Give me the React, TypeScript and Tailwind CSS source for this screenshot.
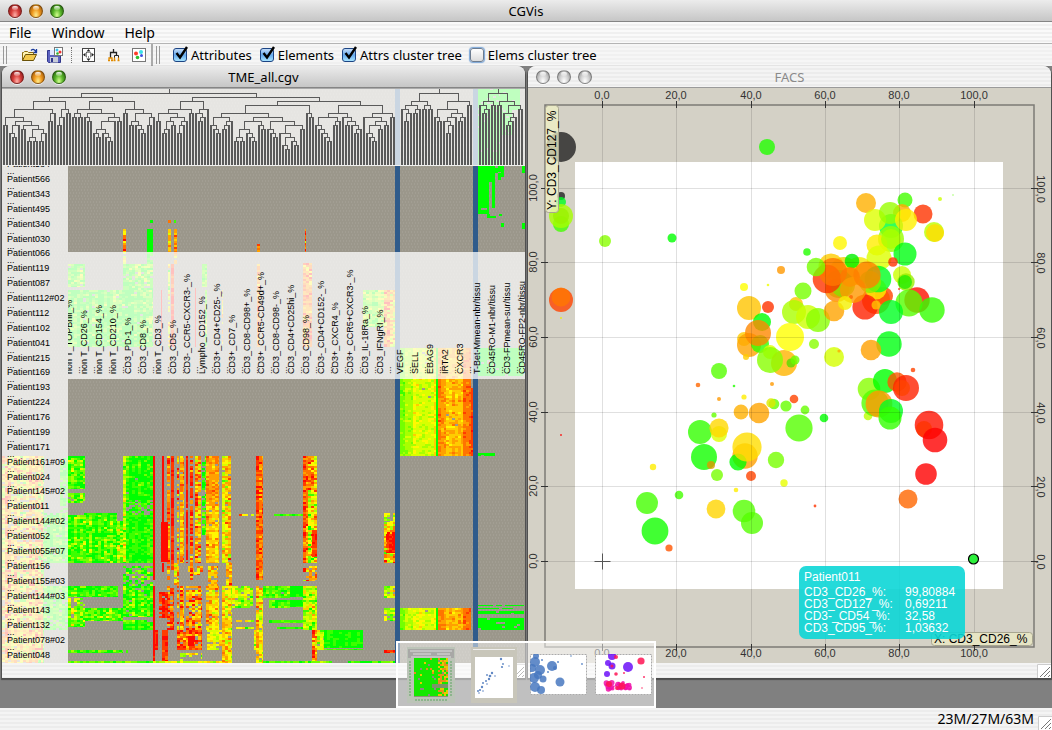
import React from "react";

/* ---------- deterministic random numbers ---------- */
function makeRandom(seed: number) {
  let s = seed;
  return () => {
    s = (s * 1664525 + 1013904223) >>> 0;
    return s / 4294967296;
  };
}

/* ---------- window chrome ---------- */
function Light({ tone, label }: { tone: "red" | "amber" | "green" | "off"; label: string }) {
  const fill = {
    red: "bg-[radial-gradient(ellipse_at_50%_85%,#ffb0a8_0%,#d8403c_45%,#7c1414_100%)]",
    amber: "bg-[radial-gradient(ellipse_at_50%_85%,#ffec8c_0%,#f09a20_45%,#8a4a08_100%)]",
    green: "bg-[radial-gradient(ellipse_at_50%_85%,#d4ff90_0%,#5cb82c_45%,#1c5408_100%)]",
    off: "bg-[radial-gradient(ellipse_at_50%_85%,#ffffff_0%,#d0d0d0_50%,#8c8c8c_100%)]",
  }[tone];
  return (
    <button
      aria-label={label}
      className={`relative size-[14px] rounded-full border border-black/30 shadow-[0_1px_0_rgba(255,255,255,.7)] ${fill}`}
    >
      <span className="absolute inset-x-[3px] top-px h-1 rounded-full bg-gradient-to-b from-white/90 to-white/20" />
    </button>
  );
}

function TitleBar({ title, active = true, rounded = false }: { title: string; active?: boolean; rounded?: boolean }) {
  return (
    <header
      className={`grid h-[22px] shrink-0 grid-cols-[1fr_auto_1fr] items-center border-b px-2 ${rounded ? "rounded-t-lg" : ""} ${
        active
          ? "border-[#858585] bg-gradient-to-b from-[#ececec] to-[#c6c6c6]"
          : "border-[#9a9a9a] bg-[repeating-linear-gradient(#f4f4f4_0_2px,#ececec_2px_4px)]"
      }`}
    >
      <div className="flex gap-[7px]">
        <Light tone={active ? "red" : "off"} label="Close" />
        <Light tone={active ? "amber" : "off"} label="Minimize" />
        <Light tone={active ? "green" : "off"} label="Zoom" />
      </div>
      <h2 className={`text-[13px] leading-4 ${active ? "text-black" : "text-[#8a8a8a]"}`}>{title}</h2>
      <span />
    </header>
  );
}

function Grip() {
  return (
    <svg width="14" height="14" viewBox="0 0 14 14" className="bg-white" aria-hidden="true">
      <path d="M0.5 14V0.5H14" stroke="#ccc" fill="none" />
      <path d="M3 13L13 3M7 13L13 7M11 13L13 11" stroke="#777" fill="none" />
    </svg>
  );
}

function WindowFrame({ title, active, children }: { title: string; active: boolean; children: React.ReactNode }) {
  return (
    <section className="flex min-w-0 flex-1 flex-col rounded-t-lg bg-[#f2f2f2] shadow-[0_1px_1px_1px_#4c4c4c]">
      <TitleBar title={title} active={active} rounded />
      <div className="min-h-0 flex-1">{children}</div>
      <footer className="flex h-[15px] shrink-0 justify-end bg-[repeating-linear-gradient(#f4f4f4_0_2px,#ececec_2px_4px)] pt-px">
        <Grip />
      </footer>
    </section>
  );
}

/* ---------- heat map ---------- */
// x0, x1, y0, y1, mean (0 green .. 1 red), spread, density
type Block = [number, number, number, number, number, number, number];

const BLOCKS: Block[] = [
  [2, 43, 456, 663, 0.6, 0.4, 0.88],
  [36, 44, 456, 663, 0.1, 0.2, 0.9],
  [60, 68, 456, 513, 0.05, 0.15, 0.7],
  [44, 68, 513, 563, 0.08, 0.2, 0.9],
  [44, 68, 586, 630, 0.08, 0.2, 0.85],
  [123, 126, 229, 252, 0.65, 0.3, 1],
  [147, 153, 229, 252, 0, 0.05, 1],
  [150, 153, 220, 223, 0, 0, 1],
  [168, 171, 229, 252, 0.6, 0.3, 1],
  [168, 171, 220, 223, 0.75, 0, 1],
  [174, 177, 229, 252, 0.7, 0.3, 1],
  [174, 176, 220, 223, 0.1, 0, 1],
  [257, 260, 244, 252, 0.8, 0.15, 1],
  [305, 306, 229, 252, 0.8, 0.4, 1],
  [123, 126, 252, 264, 0.4, 0.3, 0.7],
  [147, 153, 252, 264, 0.05, 0.1, 0.8],
  [174, 177, 252, 264, 0.6, 0.3, 0.6],
  [68, 85, 264, 287, 0.15, 0.35, 0.95],
  [123, 153, 264, 290, 0.1, 0.35, 0.92],
  [68, 153, 290, 347, 0.08, 0.3, 0.98],
  [168, 170, 264, 347, 0.5, 0.4, 0.8],
  [171, 174, 264, 347, 0.9, 0.2, 1],
  [161, 162, 290, 343, 0.95, 0, 1],
  [195, 196, 288, 347, 0.95, 0, 1],
  [202, 207, 264, 287, 0.1, 0.2, 1],
  [205, 207, 290, 347, 0.3, 0.4, 1],
  [222, 223, 290, 347, 0.6, 0.3, 0.7],
  [257, 260, 264, 347, 0.85, 0.3, 1],
  [303, 312, 263, 347, 0.75, 0.35, 1],
  [363, 385, 290, 327, 0.2, 0.3, 1],
  [384, 396, 290, 347, 0.7, 0.4, 1],
  [478, 524, 348, 376, 0, 0, 0.97],
  [478, 495, 453, 456, 0, 0, 0.95],
  [68, 85, 456, 489, 0.15, 0.35, 1],
  [68, 85, 493, 503, 0.2, 0.35, 0.95],
  [123, 126, 456, 563, 0.45, 0.35, 1],
  [126, 153, 456, 503, 0.04, 0.25, 0.97],
  [126, 153, 503, 516, 0.03, 0.15, 0.6],
  [68, 117, 515, 563, 0.12, 0.32, 1],
  [84, 117, 513, 516, 0.04, 0.1, 1],
  [117, 123, 521, 563, 0.25, 0.35, 1],
  [126, 153, 515, 563, 0.03, 0.16, 1],
  [123, 153, 566, 586, 0.08, 0.35, 0.6],
  [68, 118, 586, 597, 0.1, 0.3, 1],
  [68, 85, 598, 608, 0.25, 0.35, 0.6],
  [68, 85, 608, 627, 0.2, 0.35, 0.95],
  [85, 123, 608, 621, 0.08, 0.35, 1],
  [123, 153, 586, 617, 0.1, 0.3, 0.97],
  [123, 153, 620, 630, 0.1, 0.3, 0.95],
  [68, 123, 650, 653, 0.1, 0.2, 1],
  [126, 128, 650, 653, 0.05, 0, 1],
  [68, 153, 661, 663, 0.15, 0.15, 1],
  [153, 155, 456, 580, 1, 0.03, 1],
  [153, 155, 586, 661, 0.98, 0.05, 1],
  [153, 158, 630, 650, 0.95, 0.12, 1],
  [162, 164, 456, 522, 1, 0.02, 1],
  [161, 168, 522, 562, 0.98, 0.05, 1],
  [162, 164, 563, 572, 1, 0, 1],
  [159, 168, 592, 618, 0.95, 0.1, 0.9],
  [162, 168, 630, 661, 0.95, 0.1, 1],
  [167, 170, 456, 580, 0.75, 0.3, 0.9],
  [171, 174, 456, 570, 0.95, 0.1, 1],
  [174, 178, 563, 585, 0.5, 0.3, 0.7],
  [167, 174, 586, 630, 0.85, 0.3, 0.8],
  [177, 179, 456, 630, 0.65, 0.4, 0.7],
  [180, 184, 456, 563, 0.65, 0.25, 0.95],
  [180, 184, 586, 630, 0.65, 0.3, 0.95],
  [186, 188, 456, 563, 0.98, 0.1, 0.95],
  [190, 193, 456, 580, 0.88, 0.35, 0.9],
  [186, 202, 586, 630, 0.75, 0.35, 0.8],
  [195, 201, 456, 563, 0.65, 0.45, 0.9],
  [188, 203, 566, 575, 0.6, 0.4, 0.6],
  [202, 206, 456, 535, 0.15, 0.3, 0.8],
  [206, 219, 456, 506, 0.68, 0.15, 0.97],
  [206, 219, 506, 563, 0.64, 0.2, 0.97],
  [208, 218, 566, 586, 0.65, 0.2, 0.8],
  [206, 219, 586, 630, 0.55, 0.25, 0.95],
  [222, 231, 456, 563, 0.56, 0.35, 0.97],
  [226, 232, 563, 586, 0.65, 0.3, 0.85],
  [222, 232, 586, 663, 0.52, 0.3, 0.95],
  [177, 202, 630, 650, 0.8, 0.35, 0.92],
  [188, 194, 636, 646, 1, 0.05, 1],
  [207, 222, 630, 650, 0.45, 0.18, 0.85],
  [180, 202, 653, 663, 0.4, 0.3, 0.5],
  [153, 230, 661, 663, 0.4, 0.3, 1],
  [232, 253, 586, 608, 0.35, 0.3, 0.9],
  [236, 254, 514, 516, 0.6, 0.3, 0.8],
  [236, 254, 620, 622, 0.4, 0.3, 0.8],
  [236, 254, 627, 629, 0.3, 0.3, 0.8],
  [254, 257, 630, 650, 0.5, 0.3, 1],
  [256, 263, 456, 580, 0.82, 0.18, 1],
  [256, 263, 586, 663, 0.6, 0.35, 0.95],
  [263, 290, 586, 598, 0.15, 0.2, 0.97],
  [290, 303, 586, 597, 0, 0.08, 1],
  [269, 290, 600, 608, 0.12, 0.2, 1],
  [290, 303, 600, 607, 0, 0.12, 1],
  [274, 303, 514, 516, 0.08, 0.1, 1],
  [269, 303, 620, 623, 0.08, 0.1, 1],
  [277, 303, 627, 629, 0.08, 0.1, 1],
  [303, 308, 456, 522, 0.82, 0.2, 1],
  [308, 317, 456, 490, 0.72, 0.35, 1],
  [308, 317, 490, 563, 0.5, 0.5, 1],
  [303, 308, 522, 563, 0.75, 0.4, 1],
  [312, 317, 530, 557, 0.9, 0.1, 1],
  [303, 317, 566, 581, 0.65, 0.4, 0.75],
  [303, 317, 586, 630, 0.45, 0.35, 1],
  [312, 317, 630, 661, 0.75, 0.35, 1],
  [317, 324, 630, 650, 0.35, 0.3, 0.95],
  [324, 363, 630, 648, 0.02, 0.1, 1],
  [324, 363, 649, 650, 0.1, 0.1, 0.9],
  [263, 332, 661, 663, 0.15, 0.2, 1],
  [348, 396, 661, 663, 0.15, 0.2, 1],
  [384, 396, 513, 522, 0.35, 0.3, 0.7],
  [384, 396, 522, 563, 0.6, 0.45, 1],
  [386, 396, 532, 553, 0.95, 0.08, 0.9],
  [384, 396, 586, 598, 0.35, 0.4, 0.85],
  [384, 396, 608, 621, 0.3, 0.3, 0.9],
  [384, 396, 650, 653, 0.9, 0.15, 1],
  [478, 524, 605, 606, 0, 0, 0.8],
  [478, 513, 608, 609, 0, 0, 0.9],
  [478, 524, 611, 614, 0, 0, 0.96],
  [478, 524, 618, 630, 0, 0, 0.88],
  [478, 489, 166, 214, 0, 0, 0.97],
  [489, 492, 166, 182, 0, 0, 1],
  [492, 495, 166, 208, 0, 0, 1],
  [495, 504, 166, 173, 0, 0, 0.9],
  [498, 504, 173, 180, 0, 0, 0.7],
  [487, 502, 214, 218, 0, 0, 0.4],
  [501, 504, 223, 227, 0, 0, 1],
  [522, 525, 166, 173, 0, 0, 1],
  [522, 525, 223, 229, 0, 0, 1],
  [478, 500, 88, 166, 0, 0, 0.95],
  [500, 520, 88, 110, 0, 0, 0.93],
  [500, 512, 110, 135, 0, 0, 0.95],
];

// gene expression panel, repeated for two groups of patients
for (const [y0, y1] of [
  [348, 456],
  [608, 630],
]) {
  BLOCKS.push(
    [400, 405, y0, y1, 0.22, 0.08, 1],
    [405, 413, y0, y1, 0.32, 0.1, 1],
    [413, 422, y0, y1, 0.45, 0.14, 1],
    [422, 434, y0, y1, 0.42, 0.12, 0.98],
    [434, 436, y0, y1, 0.55, 0.1, 1],
    [436, 438, y0, y1, 0, 0, 1],
    [438, 446, y0, y1, 0.74, 0.1, 1],
    [446, 463, y0, y1, 0.65, 0.12, 0.99],
    [463, 471, y0, y1, 0.79, 0.1, 1],
    [471, 473, y0 + 40, y1, 0.88, 0.08, 1]
  );
}

const HEAT = [
  "#00ff00", "#3cff00", "#74ff00", "#a8ff00", "#d8ff00", "#fff800",
  "#ffcc00", "#ffa000", "#ff7400", "#ff3c00", "#ff0a00",
];

function heatPaths(): string[] {
  const rnd = makeRandom(41);
  const paths = HEAT.map(() => "");
  for (const [x0, x1, y0, y1, mean, spread, density] of BLOCKS) {
    const columns: number[] = [];
    for (let x = x0; x < x1; x += 3) columns.push((rnd() - 0.5) * spread * 0.7);
    for (let y = y0; y < y1; y += 2) {
      const rowBias = (rnd() - 0.5) * spread * 0.4;
      columns.forEach((bias, i) => {
        if (rnd() > density) return;
        const r = rnd() - 0.5;
        const v = mean + bias + rowBias + r * Math.abs(r) * 4 * spread;
        const level = Math.max(0, Math.min(10, Math.round(v * 10)));
        const x = x0 + i * 3;
        const w = Math.min(3, x1 - x);
        const h = Math.min(2, y1 - y);
        paths[level] += `M${x} ${y}h${w}v${h}h-${w}z`;
      });
    }
  }
  return paths;
}

/* ---------- cluster tree ---------- */
type Cluster = { range: [number, number] } | { split: [Cluster, Cluster] };

const ATTR_TREE: Cluster = {
  split: [
    {
      split: [
        { split: [{ range: [3, 54] }, { range: [57, 69] }] },
        { split: [{ range: [72, 120] }, { range: [123, 153] }] },
      ],
    },
    {
      split: [
        { split: [{ range: [156, 192] }, { range: [195, 207] }] },
        {
          split: [
            { split: [{ range: [210, 303] }, { range: [306, 312] }] },
            { split: [{ range: [315, 360] }, { range: [363, 393] }] },
          ],
        },
      ],
    },
  ],
};

const TREE_FLOOR = 165;

function treePaths(root: Cluster, seed: number): { branches: string; leaves: string } {
  const rnd = makeRandom(seed);
  let branches = "";
  let leaves = "";
  type Node = { x: number; y: number };
  const drop = (node: Node, y: number) => {
    if (node.y === TREE_FLOOR) leaves += `M${node.x} ${y}h2V${TREE_FLOOR}h-2z`;
    else branches += `M${node.x} ${y}h1V${node.y}h-1z`;
  };
  const join = (l: Node, r: Node, y: number): Node => {
    branches += `M${l.x} ${y}H${r.x + 1}v1H${l.x}z`;
    drop(l, y);
    drop(r, y);
    return { x: Math.round((l.x + r.x) / 2), y };
  };
  const grow = (lo: number, hi: number, y: number): Node => {
    const count = Math.round((hi - lo) / 3);
    if (count <= 0) return { x: lo, y: TREE_FLOOR };
    const share = y > 136 ? 0.45 : rnd() > 0.5 ? 0.1 + rnd() * 0.2 : 0.45 + rnd() * 0.45;
    const cut = lo + 3 * Math.max(0, Math.min(count - 1, Math.floor(count * share)));
    const step = y > 145 ? 2 : 4;
    const left = grow(lo, cut, y + (rnd() > 0.6 ? step * 2 : step));
    const right = grow(cut + 3, hi, y + step);
    return join(left, right, y);
  };
  const walk = (node: Cluster, y: number): Node => {
    if ("range" in node) return grow(node.range[0], node.range[1], y + 4);
    const l = walk(node.split[0], y + 4);
    const r = walk(node.split[1], y + 4);
    return join(l, r, y);
  };
  const top = walk(root, 93);
  return { branches: branches + `M${top.x} 89h1v4h-1z`, leaves };
}

function ClusterTree({ root, seed }: { root: Cluster; seed: number }) {
  const { branches, leaves } = treePaths(root, seed);
  return (
    <g fill="#5a5a5a" shapeRendering="crispEdges">
      <path d={branches} />
      <path d={leaves} />
    </g>
  );
}

const PATIENTS = [
  "Patient584", "Patient566", "Patient343", "Patient495", "Patient340", "Patient030", "Patient066", "Patient119",
  "Patient087", "Patient112#02", "Patient112", "Patient102", "Patient041", "Patient215", "Patient169", "Patient193",
  "Patient224", "Patient176", "Patient199", "Patient171", "Patient161#09", "Patient024", "Patient145#02", "Patient011",
  "Patient144#02", "Patient052", "Patient055#07", "Patient156", "Patient155#03", "Patient144#03", "Patient143",
  "Patient132", "Patient078#02", "Patient048",
];

const ATTRIBUTES = [
  "non T_TOPBnil_%", "non T_CD26_%", "non T_CD154_%", "non T_CD210_%", "CD3_PD-1_%", "CD3_CD8_%", "non T_CD3_%",
  "CD3_CD5_%", "CD3-_CCR5-CXCR3-_%", "Lympho_CD152_%", "CD3+_CD4+CD25-_%", "CD3+_CD7_%", "CD3_CD8-CD98+_%",
  "CD3+_CCR5-CD49d+_%", "CD3_CD8-CD98-_%", "CD3_CD4+CD25hi_%", "CD3_CD98_%", "CD3-_CD4+CD152-_%", "CD3+_CXCR4_%",
  "CD3+_CCR5+CXCR3-_%", "CD3_IL-18Ra_%", "CD3_IFNgRI_%", "VEGF", "SELL", "EBAG9", "IRTA2", "CXCR3",
  "T-Bet-Mmean-nbr/tissu", "CD45RO-M1-nbr/tissu", "CD3-FPmean-sur/tissu", "CD45RO-FP2-nbr/tissu",
];

function attributeX(i: number) {
  return i < 22 ? 72 + Math.round(i * 14.8) : i < 27 ? 403 + (i - 22) * 15 : 480 + (i - 27) * 15;
}

function HeatMap() {
  return (
    <svg
      viewBox="2 88 523 575"
      preserveAspectRatio="xMinYMin slice"
      className="block size-full font-['Liberation_Sans',Arial,sans-serif] text-[9px]"
      role="img"
      aria-label="Clustered heat map"
    >
      <defs>
        <pattern id="noData" width="3" height="6" patternUnits="userSpaceOnUse">
          <rect width="3" height="6" fill="#9b978b" />
          <path d="M1 0h1v2h-1zM0 3h1v2h-1z" fill="#a29e93" />
        </pattern>
        <clipPath id="rowArea">
          <rect x="2" y="166" width="66" height="497" />
        </clipPath>
        <clipPath id="columnArea">
          <rect x="68" y="252" width="457" height="127" />
        </clipPath>
      </defs>
      <rect x="2" y="88" width="523" height="575" fill="url(#noData)" />
      <g shapeRendering="crispEdges">
        {heatPaths().map((d, i) => (
          <path key={i} d={d} fill={HEAT[i]} />
        ))}
        <rect x="395" y="88" width="5" height="575" fill="#2f5b8b" />
        <rect x="473" y="88" width="5" height="575" fill="#2f5b8b" />
        <rect x="2" y="88" width="523" height="78" fill="#fff" fillOpacity=".75" />
        <rect x="2" y="166" width="66" height="497" fill="#fff" fillOpacity=".75" />
        <rect x="68" y="252" width="457" height="127" fill="#fff" fillOpacity=".75" />
        <rect x="2" y="88" width="523" height="1" fill="#aaa" />
        <rect x="2" y="165" width="523" height="1" fill="#f0f0ee" />
      </g>
      <ClusterTree root={ATTR_TREE} seed={7} />
      <ClusterTree root={{ split: [{ range: [401, 431] }, { range: [434, 470] }] }} seed={12} />
      <ClusterTree root={{ split: [{ range: [479, 494] }, { range: [497, 521] }] }} seed={5} />
      <g clipPath="url(#rowArea)">
        {PATIENTS.map((name, i) => {
          const y = Math.round(167.2 + i * 14.875);
          return (
            <React.Fragment key={name}>
              <text x="7" y={y}>{name}</text>
              {i < PATIENTS.length - 1 && <text x="7" y={y + 7}>...</text>}
            </React.Fragment>
          );
        })}
      </g>
      <g clipPath="url(#columnArea)">
        {ATTRIBUTES.map((name, i) => {
          const x = attributeX(i);
          return (
            <React.Fragment key={name}>
              <text transform={`translate(${x} 374) rotate(-90)`}>{name}</text>
              {i < 30 && <text transform={`translate(${x + 8} 374) rotate(-90)`}>...</text>}
            </React.Fragment>
          );
        })}
      </g>
    </svg>
  );
}

/* ---------- bubble chart ---------- */
type Bubble = [number, number, number, string];

const BUBBLES: Bubble[] = [
  [561, 147, 15, "#222222"], [561, 196, 4, "#222222"], [561, 202, 5, "#00ff22"], [561, 224, 8, "#44ff00"],
  [561, 216, 8, "#66bb00"], [561, 216, 12, "#a6ff00"], [561, 300, 12, "#ff4400"], [561, 297, 9.5, "#ff7700"],
  [561, 318, 1, "#eeee00"], [561, 435, 1, "#ff0000"],
  [767, 147, 8, "#22ff00"], [605, 241, 6, "#88ff00"], [672, 238, 4.5, "#00ff00"], [781, 270, 4, "#ff9900"],
  [744, 287, 4, "#ffff00"], [768, 285, 1.3, "#eeff00"], [749, 308, 12, "#ffc400"], [762, 322, 9, "#00ff00"],
  [768, 307, 6, "#ff3300"], [744, 339, 7, "#ffcc00"], [749, 345, 12, "#ffa400"], [760, 344, 9, "#33ff00"],
  [758, 333, 13, "#ff8800"], [746, 357, 3, "#ffcc00"], [770, 352, 7, "#ddff00"], [784, 363, 13, "#ffb400"],
  [770, 360, 13, "#88ff00"], [719, 371, 8, "#55ff00"], [698, 385, 2.3, "#ff6600"], [734, 386, 1.3, "#22ff00"],
  [772, 384, 2, "#ff9900"], [796, 304, 7, "#ffc400"], [794, 312, 12, "#aaff00"], [808, 317, 12, "#ccff00"],
  [818, 320, 12, "#88ff00"], [790, 337, 14, "#ffff00"], [791, 363, 4.5, "#55dd00"], [795, 360, 4.5, "#66ff00"],
  [814, 344, 5, "#88ff00"], [834, 357, 10, "#d4ff00"], [839, 351, 1.6, "#ffaa00"], [803, 291, 8.5, "#77ff00"],
  [866, 203, 10, "#ffb000"], [905, 200, 7.5, "#44ff00"], [923, 214, 9.5, "#ff3300"], [940, 199, 2, "#ccff00"],
  [953, 195, 0.8, "#88ff44"], [902, 213, 9, "#ffaa00"], [891, 226, 12, "#00ff33"], [875, 220, 11, "#ddff00"],
  [890, 213, 11, "#99ff00"], [891, 239, 13, "#99ff00"], [906, 220, 11, "#fff000"], [877, 245, 10.5, "#ffee00"],
  [891, 239, 10, "#aaff00"], [879, 258, 12.5, "#ddff00"], [934, 232, 10, "#bbff00"], [935, 233, 9, "#ffdd00"],
  [905, 254, 11.5, "#00ff11"], [840, 243, 7, "#fff600"], [807, 252, 3.8, "#22ff00"], [893, 262, 4.8, "#ff3300"],
  [902, 275, 9, "#ccff00"], [906, 282, 8.7, "#99ee00"], [905, 282, 7, "#22ee00"],
  [831, 266, 12.5, "#ffcc00"], [844, 271, 14, "#eecc00"], [859, 271, 14, "#f4e800"], [839, 284, 14, "#77ee00"],
  [837, 290, 12, "#ff8800"], [843, 285, 12, "#88e000"], [827, 279, 14.3, "#ff3300"], [833, 272, 14, "#ff7700"],
  [852, 261, 7.3, "#00f000"], [816, 267, 9.3, "#77ff00"], [850, 277, 10, "#ff7700"], [884, 296, 9, "#ff4400"],
  [876, 300, 14, "#ff5500"], [876, 289, 10.5, "#ffee00"], [878, 279, 13.3, "#00ff22"], [870, 282, 11, "#88ee00"],
  [865, 307, 12.6, "#ff2200"], [853, 290, 13, "#ff9900"], [867, 275, 13.6, "#ff8000"], [876, 305, 4.5, "#ffc400"],
  [851, 297, 2, "#ff6600"], [834, 311, 10.3, "#ffa400"], [845, 303, 7, "#f4f000"], [917, 300, 12.7, "#ff1100"],
  [909, 303, 13.6, "#55ff00"], [932, 310, 12.7, "#33ff00"], [891, 312, 12, "#00ff22"], [899, 289, 1, "#ff3300"],
  [889, 344, 12.7, "#00ff11"], [871, 350, 10.3, "#ffa000"], [913, 370, 2.3, "#ff4400"],
  [869, 389, 11.3, "#88ff00"], [885, 381, 12, "#00ff00"], [897, 382, 9.7, "#ff5500"], [906, 388, 13, "#ff2200"],
  [902, 388, 8, "#ff4400"], [794, 399, 4.3, "#ff4400"],
  [719, 399, 2, "#ff9900"], [744, 397, 2.6, "#ffee00"], [714, 415, 2.6, "#66ff00"], [741, 412, 7.4, "#ffb000"],
  [759, 413, 10.3, "#ffa400"], [774, 404, 5.3, "#66ff00"], [771, 403, 4.7, "#dde800"], [786, 406, 5.6, "#66ff00"],
  [700, 432, 12, "#33ff00"], [719, 434, 8, "#ddff00"], [719, 428, 9.6, "#ffd800"], [704, 457, 13, "#11ff00"],
  [711, 465, 4, "#dd9900"], [717, 475, 6, "#77ff00"], [745, 456, 12.7, "#ffa000"], [738, 462, 8.6, "#00ff00"],
  [747, 447, 14.6, "#ffdd00"], [751, 476, 5, "#ff4400"], [776, 460, 8.2, "#77ff00"], [784, 483, 3.7, "#e8ff00"],
  [653, 467, 3.2, "#ffee00"], [736, 490, 2.3, "#ffee00"], [679, 495, 4.3, "#44ff00"], [647, 503, 11, "#44ff00"],
  [655, 531, 13.4, "#11ff00"], [716, 509, 9.4, "#ffd400"], [744, 511, 11.3, "#55ff00"], [752, 523, 11, "#55ff00"],
  [669, 548, 3.6, "#ff5500"], [799, 428, 13.6, "#55ff00"], [805, 410, 4.4, "#66ff00"], [824, 418, 4.3, "#00ff00"],
  [868, 416, 4.3, "#bbff00"], [875, 403, 13.6, "#55ff00"], [879, 404, 13.4, "#ff9900"], [891, 411, 12, "#00ff22"],
  [890, 418, 11.5, "#33ff00"], [929, 425, 14.3, "#ff1100"], [924, 429, 8, "#ff3300"], [935, 440, 12.3, "#ff0000"],
  [926, 474, 10.8, "#ff0000"], [908, 499, 9.5, "#ff6600"], [815, 506, 1.4, "#ff3300"],
];

const TICKS = ["0,0", "20,0", "40,0", "60,0", "80,0", "100,0"];
const TICK_X = [602, 676, 751, 825, 899, 974];
const TICK_Y = [561, 486, 412, 337, 262, 188];

const TIP: [string, string][] = [
  ["CD3_CD26_%:", "99,80884"],
  ["CD3_CD127_%:", "0,69211"],
  ["CD3-_CD54_%:", "32,58"],
  ["CD3_CD95_%:", "1,03632"],
];

function BubbleChart() {
  return (
    <svg
      viewBox="528 88 523 575"
      preserveAspectRatio="xMinYMin slice"
      className="block size-full font-['Liberation_Sans',Arial,sans-serif] text-[12px]"
      role="img"
      aria-label="Bubble chart of CD3_CD127_% against CD3_CD26_%"
    >
      <rect x="528" y="88" width="523" height="575" fill="#d4d1c6" />
      <rect x="575" y="162" width="428" height="427" fill="#fff" />
      {BUBBLES.map(([x, y, r, color], i) => (
        <circle key={i} cx={x} cy={y} r={r} fill={color} fillOpacity=".8" />
      ))}
      <g stroke="#000" strokeOpacity=".12" fill="none">
        {TICK_X.map((x) => (
          <path key={x} d={`M${x + 0.5} 106V646`} />
        ))}
        {TICK_Y.map((y) => (
          <path key={y} d={`M546 ${y + 0.5}H1033`} />
        ))}
      </g>
      <path d="M545 105H1034V647H545Z" fill="none" stroke="#7c7b76" strokeWidth="1.500" />
      <g stroke="#333" fill="none">
        {TICK_X.map((x) => (
          <path key={x} d={`M${x + 0.5} 101v7M${x + 0.5} 644v7`} />
        ))}
        {TICK_Y.map((y) => (
          <path key={y} d={`M541 ${y + 0.5}h7M1031 ${y + 0.5}h7`} />
        ))}
        <path d="M594.5 561.5h16M602.5 553.5v16" stroke="#555" />
      </g>
      <g fill="#333" textAnchor="middle" className="text-[11px]">
        {TICKS.map((t, i) => (
          <React.Fragment key={t}>
            <text x={TICK_X[i]} y="99">{t}</text>
            <text x={TICK_X[i]} y="657">{t}</text>
            <text transform={`translate(537 ${TICK_Y[i]}) rotate(-90)`}>{t}</text>
            <text transform={`translate(1037 ${TICK_Y[i] + 1}) rotate(90)`}>{t}</text>
          </React.Fragment>
        ))}
      </g>
      <rect x="545.5" y="105.5" width="13" height="107" rx="3" fill="#f0f0c4" fillOpacity=".75" stroke="#a8a690" />
      <text transform="translate(556 210) rotate(-90)">Y: CD3_CD127_%</text>
      <rect x="931.5" y="632.5" width="101" height="13" rx="3" fill="#e6e4c4" stroke="#a8a690" />
      <text x="934" y="643">X: CD3_CD26_%</text>
      <circle cx="973.5" cy="559" r="5" fill="#2cf03c" stroke="#000" strokeWidth="1.2" />
      <rect x="799" y="566" width="166" height="73" rx="7" fill="#0cd6d6" fillOpacity=".9" />
      <g fill="#fff">
        <text x="804" y="581">Patient011</text>
        {TIP.map(([key, value], i) => (
          <React.Fragment key={key}>
            <text x="804" y={596 + i * 12}>{key}</text>
            <text x="905" y={596 + i * 12}>{value}</text>
          </React.Fragment>
        ))}
      </g>
    </svg>
  );
}

/* ---------- toolbar ---------- */
function Handle() {
  return <span className="h-[18px] w-1 border-x border-[#999]" />;
}

function OpenIcon() {
  return (
    <svg width="16" height="14" viewBox="0 0 16 14">
      <path d="M.5 12.5v-8h1l1-1h3l1 1h5v2" fill="#fff3b0" stroke="#8a6a10" />
      <path d="M.5 12.5l3-6h11l-3 6z" fill="#f2c84c" stroke="#6a5208" />
      <path d="M9 2.5c2-2 4-1 5 1.500M14.500 1v3.500h-3" fill="none" stroke="#1c3c9c" strokeWidth="1.300" />
    </svg>
  );
}

function SaveIcon() {
  return (
    <svg width="16" height="16" viewBox="0 0 16 16">
      <path d="M.5 3.500h13v12h-12l-1-1z" fill="#5c62c0" stroke="#30368c" />
      <rect x="3" y="3" width="7" height="5" fill="#dfe6ff" />
      <rect x="3" y="10" width="8" height="5.500" fill="#c8ccd8" />
      <rect x="4" y="11" width="2" height="4" fill="#30368c" />
      <rect x="7.500" y=".5" width="8" height="8" fill="#fff" stroke="#777" />
      <circle cx="10" cy="3" r="1.500" fill="#3cc8f0" />
      <circle cx="13" cy="5" r="1.500" fill="#f03030" />
      <circle cx="10.500" cy="6.500" r="1.300" fill="#30b030" />
    </svg>
  );
}

function FitIcon() {
  return (
    <svg width="14" height="14" viewBox="0 0 14 14">
      <rect x=".5" y=".5" width="12" height="13" fill="#fff" stroke="#444" />
      <rect x="4.500" y="4.500" width="4" height="4.500" fill="none" stroke="#222" strokeDasharray="1 1" />
      <path d="M6.500 1L4.500 3.500h4zM6.500 13L4.500 10.500h4zM1 6.800L3.500 4.800v4zM12 6.800L9.500 4.800v4z" fill="#222" />
    </svg>
  );
}

function TreeIcon() {
  return (
    <svg width="12" height="14" viewBox="0 0 12 14" fill="none">
      <path d="M5.500 1v3M2.500 10V4.500h6V8" stroke="#222" strokeWidth="1.300" />
      <path d="M6.500 10V7.500h4V10" stroke="#222" />
      <path d="M1 12.500V10h3v2.500M6.500 9.500v3M10.500 9.500v3M0 12.500h2M3 12.500h2M5.500 12.500h2M9.500 12.500h2" stroke="#e08a00" strokeWidth="1.300" />
    </svg>
  );
}

function ScatterIcon() {
  return (
    <svg width="14" height="14" viewBox="0 0 14 14">
      <rect x=".5" y=".5" width="13" height="13" fill="#fff" stroke="#777" />
      <circle cx="4" cy="5.500" r="2" fill="#ff3c28" />
      <circle cx="9" cy="4" r="2" fill="#38e0e8" />
      <circle cx="9.500" cy="7.500" r="1.500" fill="#3c50e0" />
      <circle cx="5.500" cy="9.500" r="1.800" fill="#30c030" />
    </svg>
  );
}

function ToolButton({ label, children }: { label: string; children: React.ReactNode }) {
  return (
    <button aria-label={label} title={label} className="flex w-[25px] items-center justify-center">
      {children}
    </button>
  );
}

function Toggle({ label, checked }: { label: string; checked: boolean }) {
  return (
    <label className="flex items-center gap-1">
      <span className="relative flex size-[14px]">
        <input
          type="checkbox"
          defaultChecked={checked}
          className="peer size-[14px] appearance-none rounded-[3px] border border-[#6c7c90] bg-gradient-to-b from-white to-[#dcdcdc] shadow-[0_0_1px_1px_#7aa6d8] checked:border-[#1c4484] checked:from-[#c4dcf8] checked:via-[#64a8ec] checked:to-[#a8e4ff] checked:shadow-none"
        />
        <svg viewBox="0 0 16 16" className="pointer-events-none absolute -top-[3px] left-0 hidden size-4 peer-checked:block">
          <path d="M3.500 8L7 12.500L14 2" fill="none" stroke="#000" strokeWidth="2.400" />
        </svg>
      </span>
      <span>{label}</span>
    </label>
  );
}

/* ---------- thumbnails ---------- */
function MapThumb() {
  const rnd = makeRandom(3);
  return (
    <svg width="48" height="56" viewBox="0 0 48 56">
      <rect width="48" height="56" fill="#bcc4b8" />
      <rect x="1" y="2" width="46" height="9" fill="#a8a8a6" />
      <path d="M3 4h42M6 7h18M30 7h13M4 10h40" stroke="#ddd" />
      <rect x="7" y="11" width="34" height="39" fill="#8c9478" />
      {Array.from({ length: 323 }, (_, i) => {
        const x = i % 17;
        const y = Math.floor(i / 17);
        const hot = x > 11 ? 0.65 : 0.04;
        const r = rnd();
        const gray = x > 8 && y > 12 && y < 15;
        return (
          <rect
            key={i}
            x={7 + x * 2}
            y={11 + y * 2}
            width="2"
            height="2"
            fill={gray ? "#7c9468" : r < hot ? (r < hot / 2 ? "#e8c800" : "#e8901c") : r > 0.95 ? "#8a8a80" : "#14e800"}
          />
        );
      })}
      <path d="M3 14v36M44 14v36M8 53h33" stroke="#8cb48c" strokeWidth="2" strokeDasharray="2 1" />
    </svg>
  );
}

function ThumbFrame({ w, h, children }: { w: number; h: number; children: React.ReactNode }) {
  return (
    <svg width={w} height={h} viewBox={`0 0 ${w} ${h}`}>
      <rect x=".5" y=".5" width={w - 1} height={h - 1} fill="#fff" stroke="#aaa" strokeDasharray="2 1" />
      {children}
    </svg>
  );
}

function Dots({ points, color }: { points: [number, number, number][]; color: string }) {
  return (
    <g fill={color} fillOpacity=".85">
      {points.map(([x, y, r], i) => (
        <circle key={i} cx={x} cy={y} r={r} />
      ))}
    </g>
  );
}

function Dock() {
  const rnd = makeRandom(9);
  const pink: [number, number, number][] = Array.from({ length: 34 }, () => [
    11 + rnd() * 24, 28 + rnd() * 8, 1 + rnd() * 1.8,
  ]);
  return (
    <nav
      aria-label="Views"
      className="absolute bottom-0 left-1/2 flex h-[67px] w-[260px] -translate-x-1/2 items-center gap-2 border-2 border-white bg-white/50 pl-[9px]"
    >
      <button aria-label="Heat map view" className="w-12"><MapThumb /></button>
      <button aria-label="Scatter view" className="ml-2 w-[46px]">
        <svg width="46" height="56" viewBox="0 0 46 56">
          <rect width="46" height="56" fill="#c8c6ba" />
          <path d="M2 2.500h42" stroke="#eee" />
          <rect x="4" y="10" width="38" height="41" fill="#fff" />
          <Dots
            color="#4472b8"
            points={[
              [30, 12, 1.2], [32, 17, 0.9], [31, 20, 1.1], [38, 19, 0.7], [21, 26, 1.2], [19, 29, 1.3], [16, 28, 0.9],
              [24, 29, 0.8], [18, 32, 1.2], [15, 34, 1], [12, 36, 1], [16, 37, 0.8], [11, 40, 1.2], [9, 43, 1.1], [7, 44, 1], [8, 46, 0.8], [12, 44, 0.8],
            ]}
          />
        </svg>
      </button>
      <button aria-label="Blue bubbles view" className="ml-[5px] w-[57px]">
        <ThumbFrame w={57} h={41}>
          <Dots
            color="#4878c0"
            points={[
              [5, 8, 5], [10, 16, 5], [22, 12, 5], [4, 24, 5], [13, 25, 3.5], [30, 28, 4.5], [5, 33, 5], [11, 36, 4],
              [8, 21, 4], [6, 2, 3], [12, 6, 1], [25, 14, 2], [28, 8, 1], [18, 18, 1], [41, 2, 0.8], [52, 10, 0.9], [2, 14, 4],
            ]}
          />
        </ThumbFrame>
      </button>
      <button aria-label="Pink bubbles view" className="w-[57px]">
        <ThumbFrame w={57} h={41}>
          <Dots color="#f010a8" points={pink} />
          <Dots color="#6c10f8" points={[[33, 13, 5], [17, 12, 3.5], [13, 9, 3], [12, 20, 3], [17, 2, 4]]} />
          <Dots color="#ff1454" points={[[46, 7, 3.6], [27, 32, 3.5], [21, 20, 1.8], [14, 30, 3], [22, 34, 2], [21, 3, 2], [17, 12, 1.5], [49, 23, 1], [47, 34, 0.8], [29, 19, 1]]} />
        </ThumbFrame>
      </button>
    </nav>
  );
}

/* ---------- application ---------- */
export default function App() {
  return (
    <div className="flex h-screen min-h-[600px] flex-col overflow-hidden bg-[#f0f0f0] font-['Noto_Sans','Open_Sans',sans-serif] text-[13px] leading-4 text-black">
      <TitleBar title="CGVis" />
      <nav className="flex h-[22px] shrink-0 items-center gap-5 border-b border-[#b4b4b4] bg-[repeating-linear-gradient(#fafafa_0_2px,#f0f0f0_2px_4px)] px-[9px] text-[14px]">
        <button>File</button>
        <button>Window</button>
        <button>Help</button>
      </nav>
      <div className="flex h-[22px] shrink-0 items-center bg-[repeating-linear-gradient(#f6f6f6_0_2px,#f0f0f0_2px_4px)] pl-[3px]">
        <Handle />
        <div className="ml-[10px] flex items-center">
          <ToolButton label="Open"><OpenIcon /></ToolButton>
          <ToolButton label="Save"><SaveIcon /></ToolButton>
          <span className="mx-1 h-4 border-l border-dotted border-[#777]" />
          <ToolButton label="Fit"><FitIcon /></ToolButton>
          <ToolButton label="Cluster"><TreeIcon /></ToolButton>
          <ToolButton label="Scatter plot"><ScatterIcon /></ToolButton>
        </div>
        <span className="h-full w-[2px] bg-[#aaa]" />
        <span className="w-[3px]" />
        <Handle />
        <div className="ml-[13px] flex items-center gap-2">
          <Toggle label="Attributes" checked />
          <Toggle label="Elements" checked />
          <Toggle label="Attrs cluster tree" checked />
          <Toggle label="Elems cluster tree" checked={false} />
        </div>
      </div>
      <main className="relative flex min-h-0 flex-1 gap-[3px] bg-[#808080] pb-[30px] pl-[2px] pr-px">
        <WindowFrame title="TME_all.cgv" active>
          <HeatMap />
        </WindowFrame>
        <WindowFrame title="FACS" active={false}>
          <BubbleChart />
        </WindowFrame>
        <Dock />
      </main>
      <footer className="flex h-[22px] shrink-0 items-center justify-end gap-1 bg-[repeating-linear-gradient(#f4f4f4_0_2px,#ececec_2px_4px)]">
        <output className="text-[14px]">23M/27M/63M</output>
        <span className="self-end"><Grip /></span>
      </footer>
    </div>
  );
}
